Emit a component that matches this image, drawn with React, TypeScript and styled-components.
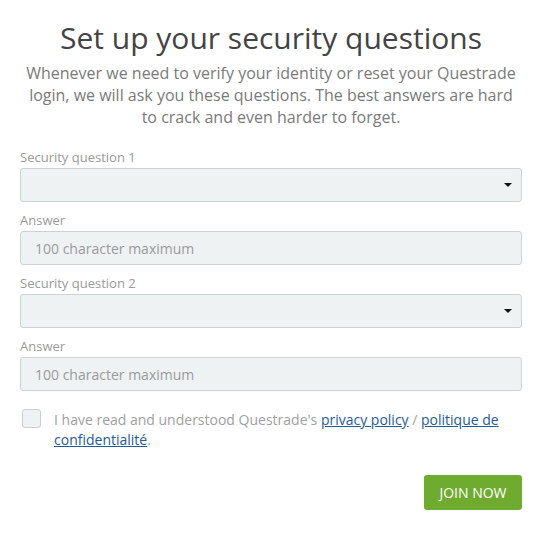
import { FC } from 'react';
import styled, { createGlobalStyle } from 'styled-components';

const GlobalStyle = createGlobalStyle`
	html, body {
		margin: 0;
		padding: 0;
		background: #ffffff;
	}
	body {
		font-family: 'Open Sans', 'Noto Sans', sans-serif;
	}
`;

const questions = [
	{ id: 1, label: 'Security question 1' },
	{ id: 2, label: 'Security question 2' },
];

const App: FC = () => {
	return (
		<>
			<GlobalStyle />
			<Page>
				<Header>
					<Title>Set up your security questions</Title>
					<Intro>
						Whenever we need to verify your identity or reset your Questrade login, we will ask you
						these questions. The best answers are hard to crack and even harder to forget.
					</Intro>
				</Header>
				<Form>
					{questions.map((q) => (
						<QuestionGroup key={q.id}>
							<Field>
								<Label>{q.label}</Label>
								<SelectBox>
									<Caret />
								</SelectBox>
							</Field>
							<Field>
								<Label>Answer</Label>
								<TextInput placeholder="100 character maximum" />
							</Field>
						</QuestionGroup>
					))}
				</Form>
				<Consent>
					<Checkbox />
					<ConsentText>
						I have read and understood Questrade's <Link href="#">privacy policy</Link> /{' '}
						<Link href="#">politique de confidentialité</Link>.
					</ConsentText>
				</Consent>
				<Actions>
					<JoinButton>JOIN NOW</JoinButton>
				</Actions>
			</Page>
		</>
	);
};

const Page = styled.div`
	width: 542px;
	box-sizing: border-box;
	padding: 19px 20px 0 20px;
`;

const Header = styled.div`
	text-align: center;
`;

const Title = styled.h1`
	margin: 0;
	font-size: 30px;
	line-height: 38px;
	font-weight: 400;
	color: #444444;
`;

const Intro = styled.p`
	margin: 5px 0 0 0;
	font-size: 16px;
	line-height: 22px;
	color: #7a7a7a;
`;

const Form = styled.div`
	margin-top: 20px;
	display: flex;
	flex-direction: column;
	gap: 9px;
`;

const QuestionGroup = styled.div`
	display: flex;
	flex-direction: column;
	gap: 9px;
`;

const Field = styled.div`
	display: flex;
	flex-direction: column;
`;

const Label = styled.label`
	font-size: 13px;
	line-height: 19px;
	color: #9a9a9a;
	margin-bottom: 1px;
`;

const SelectBox = styled.div`
	height: 34px;
	box-sizing: border-box;
	background: #eff2f3;
	border: 1px solid #cdd2d4;
	border-radius: 3px;
	display: flex;
	align-items: center;
	justify-content: flex-end;
	padding-right: 9px;
`;

const Caret = styled.span`
	width: 0;
	height: 0;
	border-left: 4px solid transparent;
	border-right: 4px solid transparent;
	border-top: 4px solid #111111;
`;

const TextInput = styled.input`
	height: 34px;
	box-sizing: border-box;
	background: #eff2f3;
	border: 1px solid #cdd2d4;
	border-radius: 3px;
	padding: 0 14px;
	font-family: 'Open Sans', sans-serif;
	font-size: 14px;
	color: #444444;
	outline: none;
	&::placeholder {
		color: #9a9a9a;
	}
`;

const Consent = styled.div`
	margin-top: 18px;
	display: flex;
	align-items: flex-start;
	gap: 13px;
	padding-left: 2px;
`;

const Checkbox = styled.span`
	flex: 0 0 auto;
	width: 19px;
	height: 19px;
	box-sizing: border-box;
	background: #eff2f3;
	border: 1px solid #c9cfd2;
	border-radius: 3px;
`;

const ConsentText = styled.p`
	margin: 1px 0 0 0;
	font-size: 14px;
	line-height: 20px;
	color: #a0a0a0;
`;

const Link = styled.a`
	color: #1f5a9a;
	text-decoration: underline;
`;

const Actions = styled.div`
	margin-top: 25px;
	display: flex;
	justify-content: flex-end;
`;

const JoinButton = styled.button`
	width: 98px;
	height: 35px;
	background: #6fab2e;
	border: none;
	border-radius: 3px;
	color: #ffffff;
	font-family: 'Open Sans', sans-serif;
	font-size: 14px;
	cursor: pointer;
`;

export default App;
